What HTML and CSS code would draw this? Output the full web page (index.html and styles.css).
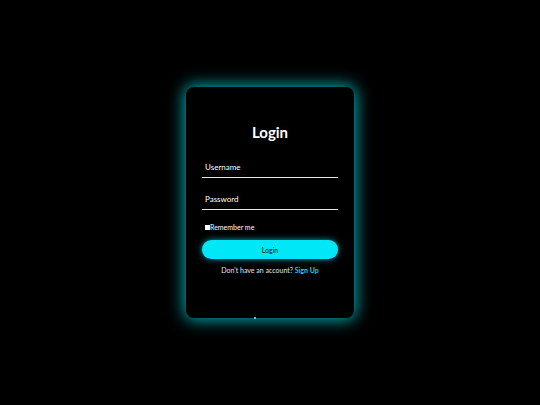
FILE: index.html
```html
<!DOCTYPE html>
<html>
<head>
<meta charset="utf-8">
<link rel="stylesheet" href="styles.css">
</head>
<body>
<div class="page">
  <form class="card">
    <h1 class="title">Login</h1>
    <div class="field"><span class="label">Username</span></div>
    <div class="field"><span class="label">Password</span></div>
    <label class="remember"><span class="box"></span>Remember me</label>
    <button class="btn" type="button">Login</button>
    <p class="signup">Don't have an account? <a class="link">Sign Up</a></p>
    <span class="dot"></span>
  </form>
</div>
</body>
</html>
```
FILE: styles.css
```css
html, body { margin: 0; padding: 0; background: #000; }
body { font-family: "Lato", "Open Sans", sans-serif; color: #fff; }
.page { width: 540px; height: 405px; display: flex; align-items: center; justify-content: center; }
.card {
  position: relative;
  box-sizing: border-box;
  width: 168px; height: 231px;
  background: #000;
  border-radius: 8px;
  box-shadow: 0 0 16px 2px rgba(0, 230, 240, 0.75);
  padding: 35px 16px 0;
  display: flex; flex-direction: column;
}
.title { margin: 0 0 13px; text-align: center; font-size: 15px; font-weight: 700; line-height: 20px; }
.field { border-bottom: 1px solid #e6e6e6; height: 22px; margin-bottom: 9px; display: flex; align-items: flex-end; }
.label { font-size: 8px; padding: 0 3px 5px; line-height: 10px; }
.remember { display: flex; align-items: center; font-size: 7px; margin: 3px 0 0 3px; line-height: 10px; }
.box { width: 5px; height: 5px; background: #fff; display: inline-block; }
.btn {
  margin-top: 8px; height: 19px; border: 0; border-radius: 10px;
  background: #00e8f8; color: #111; font-family: inherit; font-size: 7px;
  box-shadow: 0 0 6px rgba(0, 232, 248, 0.7); padding: 0;
}
.signup { margin: 6px 0 0; text-align: center; font-size: 7px; color: #e6e6e6; line-height: 10px; }
.link { color: #00d8e8; font-weight: 700; }
.dot { position: absolute; left: 68px; bottom: -1px; width: 2px; height: 2px; background: #9ad; }
```
